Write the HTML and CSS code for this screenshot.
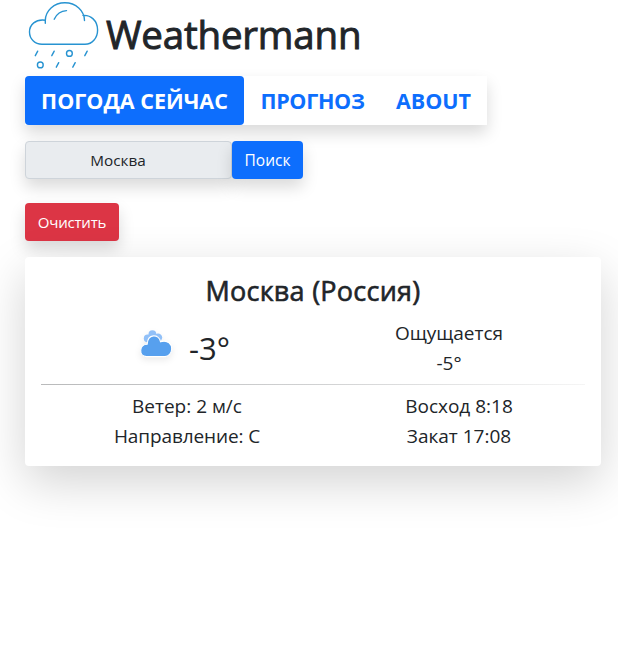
FILE: index.html
```html
<!DOCTYPE html>
<html lang="ru">
<head>
<meta charset="utf-8">
<title>Weathermann</title>
<link rel="stylesheet" href="styles.css">
</head>
<body>
<div class="container">
  <header class="brand">
    <svg class="logo" viewBox="0 0 80 76" fill="none" stroke="#2793d1" stroke-width="1.4" stroke-linecap="round">
      <path d="M20.3 23.2V20.5A19.6 17.8 0 0 1 59.5 20.5M20.3 20.2C10.5 18.7 4.5 25 4.5 32C4.5 39 10 44.3 17 44.3H60C67.5 44.3 72.6 37.7 72.6 30C72.6 20.5 65.5 14.7 58 15.4"/>
      <path d="M29.2 19.2Q33 11 41.5 10.6"/>
      <path d="M12.7 51.2l-2.4 4.5M29.2 51.2l-2.4 4.5M62.2 51.2l-2.4 4.5M33.7 62.7l-2.4 4.5M50.2 62.7l-2.4 4.5"/>
      <circle cx="44.4" cy="53.4" r="2.9"/><circle cx="15.3" cy="64.9" r="2.9"/>
    </svg>
    <h1>Weathermann</h1>
  </header>
  <nav class="tabs">
    <a class="tab tab-now active"><span>ПОГОДА СЕЙЧАС</span></a>
    <a class="tab tab-forecast"><span>ПРОГНОЗ</span></a>
    <a class="tab tab-about"><span>ABOUT</span></a>
  </nav>
  <form class="search">
    <div class="field"><span>Москва</span></div>
    <button type="button" class="btn primary"><span>Поиск</span></button>
  </form>
  <button type="button" class="btn danger"><span>Очистить</span></button>
  <section class="card">
    <h2>Москва (Россия)</h2>
    <div class="row top">
      <div class="now">
        <svg class="cloud" viewBox="0 0 34 32">
          <g fill="#91c0f8"><circle cx="12.4" cy="5.2" r="3.9"/><circle cx="7.6" cy="9.4" r="3.8"/><circle cx="18" cy="8.6" r="4.2"/></g>
          <path d="M6.5 27.6C-1.8 27-.8 15.3 7.2 15.2C7.6 4.5 19 4.5 20.5 12.7C28 10.5 32 15.5 31.7 20C31.5 24.5 28.5 27.6 25 27.6Z" fill="#57a0ee" stroke="#fff" stroke-width="1.1"/>
        </svg>
        <span class="temp">-3°</span>
      </div>
      <div class="col"><span>Ощущается</span><span>-5°</span></div>
    </div>
    <div class="rule"></div>
    <div class="row bottom">
      <div class="col"><span>Ветер: 2 м/с</span><span class="direction">Направление: С</span></div>
      <div class="col"><span>Восход 8:18</span><span>Закат 17:08</span></div>
    </div>
  </section>
</div>
</body>
</html>
```
FILE: styles.css
```css
* { box-sizing: border-box; }
body {
  margin: 0;
  background: #fff;
  color: #212529;
  font: 400 16px/24px "Open Sans", "Noto Sans", sans-serif;
  height: 667px;
  overflow: hidden;
}
h1, h2 { margin: 0; font-weight: 500; }
.container { width: 576px; margin-left: 25px; }
.brand { display: flex; height: 76px; }
.logo { width: 80px; height: 76px; flex: none; }
h1 {
  margin: 10px 0 0 1px;
  font-size: 38.5px;
  line-height: 48px;
  letter-spacing: -.2px;
  -webkit-text-stroke: .9px #212529;
}
.tabs {
  display: flex;
  width: 462px;
  height: 49px;
  box-shadow: 0 8px 16px rgba(0,0,0,.15);
}
.tab {
  display: flex;
  justify-content: center;
  color: #0d6efd;
  font-size: 21.5px;
  font-weight: 700;
  line-height: 49px;
  border-radius: 4px;
  white-space: nowrap;
}
.tab-now { width: 219px; }
.tab-forecast { width: 136px; padding-left: 1px; letter-spacing: -.3px; }
.tab-about { width: 107px; }
.active { background: #0d6efd; color: #fff; }
.search { display: flex; margin: 16px 0 24px; }
.field {
  width: 207px;
  height: 38px;
  padding-right: 21px;
  border: 1px solid #ced4da;
  border-radius: 4px;
  background: #e9ecef;
  line-height: 37px;
  text-align: center;
  font-size: 15.3px;
  box-shadow: 0 8px 16px rgba(0,0,0,.15);
}
.btn {
  display: flex;
  justify-content: center;
  align-items: center;
  height: 38px;
  padding: 0;
  border: 0;
  border-radius: 4px;
  color: #fff;
  font: inherit;
  font-size: 15.5px;
  box-shadow: 0 8px 16px rgba(0,0,0,.15);
}
.primary { width: 71px; background: #0d6efd; }
.danger { width: 94px; background: #dc3545; font-size: 15px; letter-spacing: -.2px; }
.card {
  height: 209px;
  margin-top: 16px;
  padding: 16px;
  border-radius: 4px;
  background: #fff;
  font-size: 19px;
  line-height: 30px;
  box-shadow: 0 16px 48px rgba(0,0,0,.175);
}
h2 {
  height: 45px;
  padding-top: 1px;
  font-size: 27px;
  line-height: 34px;
  letter-spacing: .25px;
  text-align: center;
  -webkit-text-stroke: .6px #212529;
}
.row { display: grid; grid-template-columns: 1fr 1fr; }
.col { display: flex; flex-direction: column; align-items: center; }
.top { height: 66px; }
.now { display: flex; padding-left: 99px; }
.cloud {
  width: 34px;
  height: 32px;
  margin-top: 11px;
  filter: drop-shadow(0 3px 3px rgba(0,0,0,.08));
}
.temp { margin: 15px 0 0 15px; font-size: 31px; }
.rule { height: 1px; background: linear-gradient(90deg, #b9babb, #d0d1d2 50%, #f5f5f5); }
.bottom { padding: 6px 0 0 10px; grid-template-columns: 272px 272px; }
.direction { letter-spacing: -.1px; }
```
